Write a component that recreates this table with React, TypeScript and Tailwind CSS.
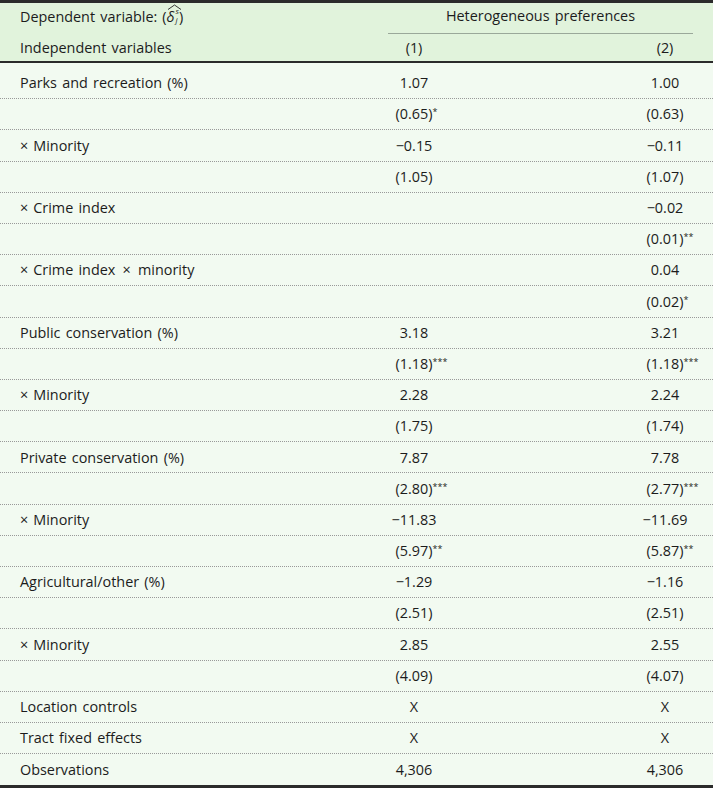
import type { ReactNode } from 'react';

type Row = { label: ReactNode; a?: string; as?: string; b?: string; bs?: string };

const X = <span className="mr-[5px]">×</span>;

const ROWS: Row[] = [
  { label: 'Parks and recreation (%)', a: '1.07', b: '1.00' },
  { label: '', a: '(0.65)', as: '*', b: '(0.63)' },
  { label: <>{X}Minority</>, a: '−0.15', b: '−0.11' },
  { label: '', a: '(1.05)', b: '(1.07)' },
  { label: <>{X}Crime index</>, b: '−0.02' },
  { label: '', b: '(0.01)', bs: '**' },
  { label: <>{X}Crime index <span className="mx-[2px]">×</span> minority</>, b: '0.04' },
  { label: '', b: '(0.02)', bs: '*' },
  { label: 'Public conservation (%)', a: '3.18', b: '3.21' },
  { label: '', a: '(1.18)', as: '***', b: '(1.18)', bs: '***' },
  { label: <>{X}Minority</>, a: '2.28', b: '2.24' },
  { label: '', a: '(1.75)', b: '(1.74)' },
  { label: 'Private conservation (%)', a: '7.87', b: '7.78' },
  { label: '', a: '(2.80)', as: '***', b: '(2.77)', bs: '***' },
  { label: <>{X}Minority</>, a: '−11.83', b: '−11.69' },
  { label: '', a: '(5.97)', as: '**', b: '(5.87)', bs: '**' },
  { label: 'Agricultural/other (%)', a: '−1.29', b: '−1.16' },
  { label: '', a: '(2.51)', b: '(2.51)' },
  { label: <>{X}Minority</>, a: '2.85', b: '2.55' },
  { label: '', a: '(4.09)', b: '(4.07)' },
  { label: 'Location controls', a: 'X', b: 'X' },
  { label: 'Tract fixed effects', a: 'X', b: 'X' },
  { label: 'Observations', a: '4,306', b: '4,306' },
];

function Num({ v, s }: { v?: string; s?: string }) {
  if (!v) return null;
  return (
    <span className="whitespace-nowrap">
      {s && <span className="invisible text-[9px] align-[4px]">{s}</span>}
      {v}
      {s && <span className="text-[9px] align-[4px]">{s}</span>}
    </span>
  );
}

function DeltaHat() {
  return (
    <span className="relative inline-flex items-center italic h-[20px]">
      <svg className="absolute left-[0px] top-[-3px]" width="15" height="6" viewBox="0 0 15 6">
        <path d="M1 5.5 L7.5 1 L14 5.5" fill="none" stroke="#222" strokeWidth="0.9" />
      </svg>
      <span>δ</span>
      <span className="flex flex-col gap-[1px] text-[8px] leading-[8px] ml-[1px] -mt-[3px]">
        <span>s</span>
        <span>j</span>
      </span>
    </span>
  );
}

export default function App() {
  return (
    <div
      className="w-[713px] h-[788px] text-[14.4px] [word-spacing:1.5px] text-[#1c1c1c] bg-[#f2faf1] flex flex-col"
      style={{ fontFamily: '"Open Sans", "Noto Sans", sans-serif' }}
    >
      {/* Header */}
      <header className="bg-[#e1f3dc] border-t-[3px] border-b-2 border-[#2b2b2b] shrink-0">
        <div className="flex h-[31px]">
          <div className="w-[340px] pl-[20px] pb-[4px] flex items-center">
            <span>Dependent variable:</span>
            <span className="ml-[5px]">(</span>
            <DeltaHat />
            <span>)</span>
          </div>
          <div className="flex-1 ml-[48px] mr-[20px] pb-[4px] border-b border-[#9aa89a] flex items-center justify-center">
            Heterogeneous preferences
          </div>
        </div>
        <div className="flex h-[27px] items-center">
          <div className="w-[340px] pl-[20px]">Independent variables</div>
          <div className="w-[148px] text-center">(1)</div>
          <div className="flex-1" />
          <div className="w-[96px] text-center">(2)</div>
        </div>
      </header>

      {/* Body */}
      <main className="flex-1 pt-[5px] border-b-[3px] border-[#2b2b2b]">
        {ROWS.map((r, i) => (
          <div
            key={i}
            className={`flex h-[31.2px] items-center ${
              i < ROWS.length - 1 ? 'border-b border-dotted border-[#999999]' : ''
            }`}
          >
            <div className="w-[340px] pl-[20px] whitespace-nowrap">{r.label}</div>
            <div className="w-[148px] text-center">
              <Num v={r.a} s={r.as} />
            </div>
            <div className="flex-1" />
            <div className="w-[96px] text-center">
              <Num v={r.b} s={r.bs} />
            </div>
          </div>
        ))}
      </main>
    </div>
  );
}
